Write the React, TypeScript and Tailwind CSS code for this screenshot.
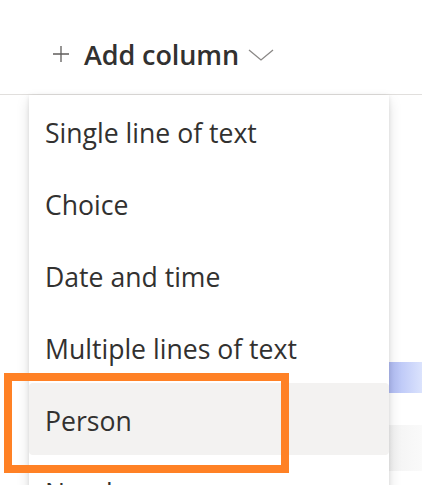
import React from "react";

const items = [
  "Single line of text",
  "Choice",
  "Date and time",
  "Multiple lines of text",
  "Person",
  "Number",
];

export default function App() {
  return (
    <div className="relative w-[422px] h-[485px] overflow-hidden bg-white text-[#323130]" style={{ fontFamily: '"Open Sans", "Noto Sans", sans-serif' }}>
      {/* header */}
      <div className="h-[95px] flex items-center pl-[52px] pt-[14px] border-b border-[#e1dfdd]">
        <svg width="18" height="18" viewBox="0 0 18 18" className="mr-[14px]">
          <path d="M9 1v16M1 9h16" stroke="#605e5c" strokeWidth="1.3" fill="none" />
        </svg>
        <span className="text-[27px] font-semibold tracking-[-0.1px] leading-none">Add column</span>
        <svg width="26" height="12" viewBox="0 0 26 12" className="ml-[9px] mt-[2px]">
          <path d="M1 1l12 10L25 1" stroke="#8a8886" strokeWidth="1.3" fill="none" />
        </svg>
      </div>
      {/* background rows */}
      <div className="h-[267px]" />
      <div className="h-[31px] flex">
        <div className="ml-[389px] flex-1 bg-gradient-to-r from-[#b0bcf4] to-[#dbe3fd]" />
      </div>
      <div className="h-[32px]" />
      <div className="h-[46px] flex">
        <div className="ml-[389px] flex-1 bg-gradient-to-r from-[#f3f3f3] to-[#fafafa]" />
      </div>

      {/* dropdown menu */}
      <div className="absolute left-[29px] top-[95px] w-[360px] bg-white rounded-b-[4px] shadow-[0_6px_14px_rgba(0,0,0,0.13),0_1px_4px_rgba(0,0,0,0.1)]">
        {items.map((t) => (
          <div
            key={t}
            className={`h-[72px] flex items-center pl-[16px] pt-[5px] text-[26.6px] tracking-[0px] rounded-[4px] ${t === "Person" ? "bg-[#f3f2f1]" : ""}`}
          >
            {t}
          </div>
        ))}
      </div>

      {/* annotation */}
      <div className="absolute left-[4px] top-[373px] w-[285px] h-[100px] border-[8px] border-[#ff8125]" />
    </div>
  );
}
